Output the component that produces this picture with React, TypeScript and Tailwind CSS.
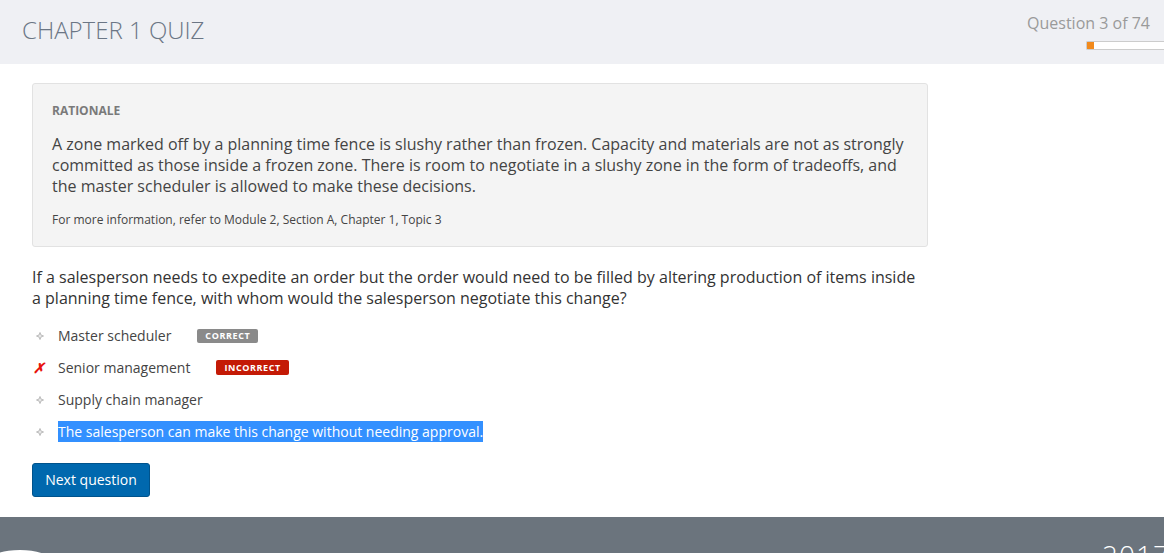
import React from "react";

const font = { fontFamily: '"Open Sans", "Noto Sans", Arial, sans-serif' };

function Bullet() {
  return (
    <span className="w-[26px] flex items-center justify-start pl-[4px]">
      <svg width="8" height="8" viewBox="0 0 8 8" fill="none">
        <path d="M4 0.5 L5 3 L7.5 4 L5 5 L4 7.5 L3 5 L0.5 4 L3 3 Z" stroke="#b5b5b5" strokeWidth="0.9" fill="#e6e6e6" />
      </svg>
    </span>
  );
}

function Cross() {
  return (
    <span className="w-[26px] flex items-center justify-start pl-[1px]">
      <span className="text-[14px] font-bold italic text-[#e8140c] leading-none">✗</span>
    </span>
  );
}

export default function App() {
  return (
    <div className="w-[1164px] h-[553px] overflow-hidden bg-white flex flex-col" style={font}>
      <header className="h-[64px] bg-[#eff0f4] flex justify-between shrink-0">
        <h1 className="pl-[22px] pt-[14px] text-[24px] font-light text-[#6b7685] leading-[32px] tracking-[0px]">
          CHAPTER 1 QUIZ
        </h1>
        <div className="flex flex-col items-end pt-[12px]">
          <div className="pr-[14px] text-[16px] text-[#9a9a9a] leading-[22px]">Question 3 of 74</div>
          <div className="mt-[7px] w-[78px] h-[9px] border border-[#cccccc] border-r-0 bg-white rounded-l-[2px] flex">
            <div className="w-[7px] h-full bg-[#f28a1c]" />
          </div>
        </div>
      </header>

      <main className="pl-[32px] pt-[19px] w-[960px] flex-1">
        <section className="w-[896px] bg-[#f4f4f4] border border-[#e2e2e2] rounded-[3px] pl-[19px] pr-[20px] pt-[18px] pb-[17px]">
          <div className="text-[12px] font-bold text-[#7a7a7a] leading-[18px]">RATIONALE</div>
          <p className="mt-[14px] text-[16px] text-[#444444] leading-[21px]">
            A zone marked off by a planning time fence is slushy rather than frozen. Capacity and materials are not as strongly
            committed as those inside a frozen zone. There is room to negotiate in a slushy zone in the form of tradeoffs, and
            the master scheduler is allowed to make these decisions.
          </p>
          <p className="mt-[14px] text-[12px] text-[#444444] leading-[18px]">
            For more information, refer to Module 2, Section A, Chapter 1, Topic 3
          </p>
        </section>

        <p className="mt-[20px] w-[896px] text-[16px] text-[#333333] leading-[21px]">
          If a salesperson needs to expedite an order but the order would need to be filled by altering production of items inside
          a planning time fence, with whom would the salesperson negotiate this change?
        </p>

        <ul className="mt-[16px] flex flex-col gap-[11px] text-[14px] text-[#444444] leading-[21px]">
          <li className="flex items-center">
            <Bullet />
            <span>Master scheduler</span>
            <span className="ml-[26px] bg-[#8a8a8a] text-white text-[9px] font-bold tracking-[0.6px] leading-[14px] px-[8px] rounded-[2px]">
              CORRECT
            </span>
          </li>
          <li className="flex items-center">
            <Cross />
            <span>Senior management</span>
            <span className="ml-[26px] bg-[#c41a06] text-white text-[9px] font-bold tracking-[0.6px] leading-[15px] px-[8px] rounded-[2px]">
              INCORRECT
            </span>
          </li>
          <li className="flex items-center">
            <Bullet />
            <span>Supply chain manager</span>
          </li>
          <li className="flex items-center">
            <Bullet />
            <span className="bg-[#3390ff] text-white">The salesperson can make this change without needing approval.</span>
          </li>
        </ul>

        <button className="mt-[21px] h-[34px] w-[118px] bg-[#0068ae] border border-[#00538c] rounded-[3px] text-white text-[14px] leading-[20px]">
          Next question
        </button>
      </main>

      <footer className="h-[36px] shrink-0 bg-[#6b747d] relative overflow-hidden">
        <div className="absolute left-[-10px] top-[33px] w-[60px] h-[20px] rounded-[50%] bg-white" />
        <div className="absolute right-[-6px] top-[24px] text-[28px] text-white font-light leading-none tracking-[1px]">2017</div>
      </footer>
    </div>
  );
}
